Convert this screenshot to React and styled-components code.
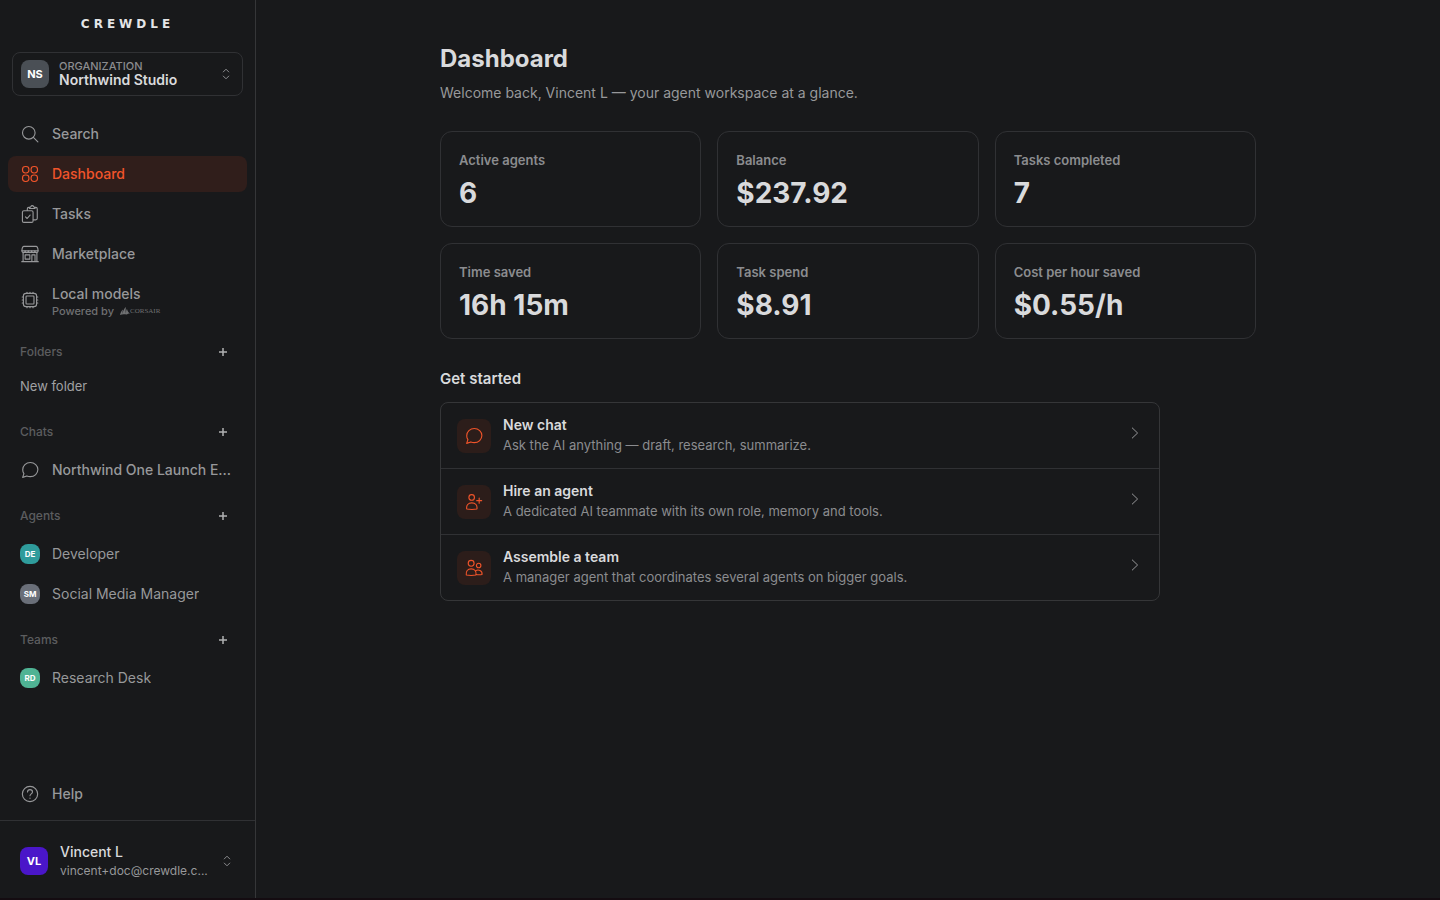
import React from 'react';
import styled, { createGlobalStyle, css } from 'styled-components';

const stats = [
  { label: 'Active agents', value: '6' },
  { label: 'Balance', value: '$237.92' },
  { label: 'Tasks completed', value: '7' },
  { label: 'Time saved', value: '16h 15m' },
  { label: 'Task spend', value: '$8.91' },
  { label: 'Cost per hour saved', value: '$0.55/h' },
];

const App = () => {
  return (
    <Page>
      <GlobalStyle />

      {/* Sidebar */}
      <Sidebar>
        <Brand href="#">CREWDLE</Brand>

        <OrgButton type="button">
          <Avatar $size="large" $color="#4a4f55">NS</Avatar>
          <OrgText>
            <OrgLabel>ORGANIZATION</OrgLabel>
            <OrgName>Northwind Studio</OrgName>
          </OrgText>
          <SortIcon />
        </OrgButton>

        <Nav>
          <NavItem href="#"><SearchIcon /><NavText>Search</NavText></NavItem>
          <NavItem href="#" $active aria-current="page"><DashboardIcon /><NavText>Dashboard</NavText></NavItem>
          <NavItem href="#"><TasksIcon /><NavText>Tasks</NavText></NavItem>
          <NavItem href="#"><StoreIcon /><NavText>Marketplace</NavText></NavItem>
          <NavItem href="#" $tall>
            <ChipIcon />
            <ModelText>
              <NavText>Local models</NavText>
              <PoweredBy>
                Powered by
                <Corsair><ShipIcon />CORSAIR</Corsair>
              </PoweredBy>
            </ModelText>
          </NavItem>
        </Nav>

        <Section title="Folders" tight>
          <FolderItem href="#">New folder</FolderItem>
        </Section>

        <Section title="Chats">
          <NavItem href="#"><ChatIcon /><NavText>Northwind One Launch E...</NavText></NavItem>
        </Section>

        <Section title="Agents">
          <NavItem href="#" $light><Avatar $color="#2f9c9c">DE</Avatar><NavText>Developer</NavText></NavItem>
          <NavItem href="#" $light><Avatar $color="#6a6f79">SM</Avatar><NavText>Social Media Manager</NavText></NavItem>
        </Section>

        <Section title="Teams">
          <NavItem href="#" $light><Avatar $color="#4fb394">RD</Avatar><NavText>Research Desk</NavText></NavItem>
        </Section>

        <Spacer />

        <HelpNav>
          <NavItem href="#"><HelpIcon /><NavText>Help</NavText></NavItem>
        </HelpNav>

        <ProfileButton type="button">
          <Avatar $size="large" $color="#4a16c9">VL</Avatar>
          <ProfileText>
            <ProfileName>Vincent L</ProfileName>
            <ProfileEmail>vincent+doc@crewdle.c...</ProfileEmail>
          </ProfileText>
          <SortIcon />
        </ProfileButton>
      </Sidebar>

      {/* Main content */}
      <Main>
        <Content>
          <Title>Dashboard</Title>
          <Subtitle>Welcome back, Vincent L — your agent workspace at a glance.</Subtitle>

          <StatGrid>
            {stats.map((stat) => (
              <StatCard key={stat.label}>
                <StatLabel>{stat.label}</StatLabel>
                <StatValue>{stat.value}</StatValue>
              </StatCard>
            ))}
          </StatGrid>

          <SubHeading>Get started</SubHeading>
          <ActionList>
            <Action
              icon={<ChatIcon />}
              title="New chat"
              text="Ask the AI anything — draft, research, summarize."
            />
            <Action
              icon={<HireIcon />}
              title="Hire an agent"
              text="A dedicated AI teammate with its own role, memory and tools."
            />
            <Action
              icon={<TeamIcon />}
              title="Assemble a team"
              text="A manager agent that coordinates several agents on bigger goals."
            />
          </ActionList>
        </Content>
      </Main>
    </Page>
  );
};

const Section = ({ title, tight, children }) => (
  <SectionBox>
    <SectionHeader $tight={tight}>
      <SectionTitle>{title}</SectionTitle>
      <AddButton type="button" aria-label={`Add to ${title}`}>
        <svg width="10" height="10" viewBox="0 0 10 10" stroke="currentColor" strokeWidth="1.5">
          <path d="M5 1v8M1 5h8" />
        </svg>
      </AddButton>
    </SectionHeader>
    <SectionItems>{children}</SectionItems>
  </SectionBox>
);

const Action = ({ icon, title, text }) => (
  <ActionRow href="#">
    <ActionIcon>{icon}</ActionIcon>
    <ActionText>
      <ActionTitle>{title}</ActionTitle>
      <ActionDescription>{text}</ActionDescription>
    </ActionText>
    <ActionArrow width="8" height="12" viewBox="0 0 8 12">
      <path d="M1 0.7 6.6 6 1 11.3" />
    </ActionArrow>
  </ActionRow>
);

// Icons, all on a 24 unit grid

const SearchIcon = () => (
  <Icon viewBox="0 0 24 24">
    <circle cx="10.4" cy="10.4" r="8.4" />
    <path d="m16.5 16.5 6 6" />
  </Icon>
);

const DashboardIcon = () => (
  <Icon viewBox="0 0 24 24">
    <rect x="2" y="2" width="8.6" height="8.6" rx="3.9" />
    <rect x="13.4" y="2" width="8.6" height="8.6" rx="3.9" />
    <rect x="2" y="13.4" width="8.6" height="8.6" rx="3.9" />
    <rect x="13.4" y="13.4" width="8.6" height="8.6" rx="3.9" />
  </Icon>
);

const TasksIcon = () => (
  <Icon viewBox="0 0 24 24">
    <rect x="1.9" y="7.6" width="14.2" height="15.6" rx="2" />
    <path d="m6 15.8 2.2 2.2 3.9-4.6" />
    <path d="M8.4 7.4V5.2c0-1.2.8-2 2-2h1.2M18.2 3.2h1.5c1.2 0 2 .8 2 2v12.6c0 1.2-.8 2-2 2h-3.4" />
    <path d="M11.2 4.6c0-1.6 1-2.1 2-2.3.5-1.9 3-1.9 3.6 0 1 .2 1.9.7 1.9 2.3z" />
  </Icon>
);

const StoreIcon = () => (
  <Icon viewBox="0 0 24 24">
    <path d="M4 1.9h16c1.6 0 2.6 1.8 2.8 5.9H1.2C1.4 3.7 2.4 1.9 4 1.9z" />
    <path d="M1.2 7.8c0 3.2 4.3 3.2 4.3 0 0 3.2 4.3 3.2 4.3 0 0 3.2 4.4 3.2 4.4 0 0 3.2 4.3 3.2 4.3 0 0 3.2 4.3 3.2 4.3 0" />
    <path d="M2.8 10.5v11.7M21.2 10.5v11.7M1 22.2h22" />
    <path d="M5.5 13.2h6.3v5.6H5.5zM14.5 22v-8.8h4.2V22" />
  </Icon>
);

const ChipIcon = () => (
  <Icon viewBox="0 0 24 24">
    <rect x="3.2" y="3.2" width="17.6" height="17.6" rx="3.5" />
    <rect x="6.7" y="6.7" width="10.6" height="10.6" rx="1" />
    <path d="M8 3V1.6M12 3V1.6M16 3V1.6M8 22.4V21M12 22.4V21M16 22.4V21M3 8H1.6M3 12H1.6M3 16H1.6M22.4 8H21M22.4 12H21M22.4 16H21" />
  </Icon>
);

const ChatIcon = () => (
  <Icon viewBox="0 0 24 24">
    <path d="M12.4 2c5.7 0 10.1 4.2 10.1 9.4s-4.4 9.5-10.1 9.5c-1.7 0-3.2-.4-4.6-1L2.2 21.8l1.7-4.9c-1-1.5-1.6-3.4-1.6-5.4C2.3 6.2 6.7 2 12.4 2z" />
  </Icon>
);

const HelpIcon = () => (
  <Icon viewBox="0 0 24 24">
    <circle cx="12" cy="12" r="10.2" />
    <path d="M8.7 9.4c0-1.9 1.5-3.2 3.3-3.2s3.3 1.3 3.3 3.1c0 2.5-3.3 2.5-3.3 5" />
    <path d="M12 17.3v.5" />
  </Icon>
);

const HireIcon = () => (
  <Icon viewBox="0 0 24 24">
    <circle cx="8.9" cy="5.9" r="3.7" />
    <path d="M2.3 21.3c-.8-5 2-8.2 6.8-8.2s7.6 3.2 6.8 8.2c-4.3.8-9.300.8-13.600 0z" />
    <path d="M18.9 6.9v6.6M15.6 10.2h6.6" />
  </Icon>
);

const TeamIcon = () => (
  <Icon viewBox="0 0 24 24">
    <circle cx="8.2" cy="5.7" r="3.9" />
    <circle cx="18.2" cy="8.6" r="3" />
    <path d="M1.700 21.300c-.8-5 1.900-8.200 6.500-8.200s7.300 3.200 6.500 8.200c-4.100.8-8.900.8-13 0z" />
    <path d="M14 15.900c3.600-2.500 9.400-.6 8.700 4.700-2.500.5-5.300.5-7.800 0" />
  </Icon>
);

const SortIcon = () => (
  <SortSvg width="8" height="12" viewBox="0 0 8 12">
    <path d="M1 4.2l3-3 3 3M1 7.8l3 3 3-3" />
  </SortSvg>
);

const ShipIcon = () => (
  <svg width="10" height="8" viewBox="0 0 20 16" fill="currentColor">
    <path d="M0 16c1-5 3-9 6-11-1 3-1 6-1 9 1-6 3-11 7-14-1 5-1 9 0 13 0-4 0-7 2-9 1 4 3 7 6 9-3 0-5 1-7 2-4-1-9-1-13 1z" />
  </svg>
);

// Styled Components

const GlobalStyle = createGlobalStyle`
  *, *::before, *::after {
    box-sizing: border-box;
  }

  body {
    margin: 0;
    background-color: #18191b;
    color: #d9dadc;
    font-family: Inter, "Liberation Sans", sans-serif;
    font-size: 14px;
    line-height: 20px;
    -webkit-font-smoothing: antialiased;
  }

  a {
    color: inherit;
    text-decoration: none;
  }

  button {
    font: inherit;
    color: inherit;
    background: none;
    border: none;
    padding: 0;
    text-align: left;
    cursor: pointer;
  }
`;

const ellipsis = css`
  overflow: hidden;
  text-overflow: ellipsis;
  white-space: nowrap;
`;

const Page = styled.div`
  display: flex;
  min-height: 100vh;
  border-bottom: 2px solid #140c11;
`;

const Sidebar = styled.aside`
  display: flex;
  flex-direction: column;
  flex: none;
  width: 256px;
  border-right: 1px solid #353638;
`;

const Brand = styled.a`
  padding: 14px 0 18px;
  text-align: center;
  color: #e4e5e7;
  font-family: "DejaVu Sans", sans-serif;
  font-size: 12px;
  font-weight: 700;
  letter-spacing: 4px;
`;

const OrgButton = styled.button`
  display: flex;
  align-items: center;
  gap: 10px;
  height: 44px;
  margin: 0 12px;
  padding: 0 12px 0 8px;
  border: 1px solid #303134;
  border-radius: 8px;
`;

const Avatar = styled.span`
  display: flex;
  align-items: center;
  justify-content: center;
  flex: none;
  width: ${(props) => (props.$size === 'large' ? 28 : 20)}px;
  height: ${(props) => (props.$size === 'large' ? 28 : 20)}px;
  border-radius: 8px;
  background-color: ${(props) => props.$color};
  color: #ffffff;
  font-size: ${(props) => (props.$size === 'large' ? 11 : 8)}px;
  font-weight: 700;
`;

const OrgText = styled.span`
  display: flex;
  flex-direction: column;
  flex: 1;
  min-width: 0;
`;

const OrgLabel = styled.span`
  color: #8b8c8f;
  font-size: 11px;
  font-weight: 500;
  line-height: 12px;
`;

const OrgName = styled.span`
  ${ellipsis}
  font-weight: 600;
  line-height: 16px;
`;

const SortSvg = styled.svg`
  flex: none;
  fill: none;
  stroke: #8b8c8f;
  stroke-width: 1;
`;

const Nav = styled.nav`
  display: flex;
  flex-direction: column;
  gap: 4px;
  margin-top: 20px;
  padding: 0 8px;
`;

const HelpNav = styled(Nav)`
  margin: 0 0 8px;
`;

const NavItem = styled.a`
  display: flex;
  align-items: center;
  gap: 12px;
  height: ${(props) => (props.$tall ? 48 : 36)}px;
  padding: 0 12px;
  border-radius: 8px;
  color: ${(props) => (props.$active ? '#f0542a' : '#97989a')};
  background-color: ${(props) => (props.$active ? '#301e1b' : 'transparent')};
  font-weight: ${(props) => (props.$light ? 400 : 500)};
`;

const NavText = styled.span`
  ${ellipsis}
`;

const Icon = styled.svg`
  flex: none;
  width: 20px;
  height: 18px;
  fill: none;
  stroke: currentColor;
  stroke-width: 1.5;
  stroke-linecap: round;
  stroke-linejoin: round;
`;

const ModelText = styled.span`
  display: flex;
  flex-direction: column;
  padding-top: 2px;
`;

const PoweredBy = styled.span`
  display: flex;
  align-items: center;
  gap: 6px;
  color: #6f7072;
  font-size: 11px;
  line-height: 14px;
`;

const Corsair = styled.span`
  display: flex;
  align-items: center;
  font-family: "Liberation Serif", serif;
  font-size: 7px;
`;

const Spacer = styled.div`
  flex: 1;
`;

const SectionBox = styled.section`
  margin-top: 16px;
`;

const SectionHeader = styled.div`
  display: flex;
  align-items: center;
  justify-content: space-between;
  height: 24px;
  margin-bottom: ${(props) => (props.$tight ? 4 : 8)}px;
  padding: 0 24px 0 20px;
`;

const SectionTitle = styled.h2`
  margin: 0;
  color: #5c5d5f;
  font-size: 12px;
  font-weight: 500;
`;

const AddButton = styled.button`
  display: flex;
  align-items: center;
  justify-content: center;
  width: 16px;
  height: 16px;
  color: #b0b1b3;
`;

const SectionItems = styled.div`
  display: flex;
  flex-direction: column;
  gap: 4px;
  padding: 0 8px;
`;

const FolderItem = styled.a`
  display: flex;
  align-items: center;
  height: 36px;
  padding: 0 12px;
  color: #a0a1a3;
  font-size: 13px;
`;

const ProfileButton = styled.button`
  display: flex;
  align-items: center;
  gap: 12px;
  padding: 21px 24px 18px 20px;
  border-top: 1px solid #303134;
`;

const ProfileText = styled.span`
  display: flex;
  flex-direction: column;
  flex: 1;
  min-width: 0;
`;

const ProfileName = styled.span`
  font-weight: 500;
`;

const ProfileEmail = styled.span`
  ${ellipsis}
  color: #97989a;
  font-size: 12px;
  line-height: 18px;
`;

const Main = styled.main`
  flex: 1;
  min-width: 0;
  padding: 43px 32px;
`;

const Content = styled.div`
  max-width: 816px;
  margin: 0 auto;
`;

const Title = styled.h1`
  margin: 0 0 8px;
  font-size: 24px;
  font-weight: 700;
  line-height: 32px;
`;

const Subtitle = styled.p`
  margin: 0 0 28px;
  color: #97989a;
`;

const StatGrid = styled.div`
  display: grid;
  grid-template-columns: repeat(3, 1fr);
  gap: 16px;
`;

const StatCard = styled.div`
  padding: 18px;
  border: 1px solid #303134;
  border-radius: 12px;
`;

const StatLabel = styled.div`
  margin-bottom: 8px;
  color: #8b8c8f;
  font-size: 13px;
  font-weight: 600;
`;

const StatValue = styled.div`
  font-size: 28px;
  font-weight: 700;
  line-height: 30px;
`;

const SubHeading = styled.h2`
  margin: 30px 0 13px;
  font-size: 15px;
  font-weight: 600;
  line-height: 20px;
`;

const ActionList = styled.div`
  max-width: 720px;
  border: 1px solid #353638;
  border-radius: 8px;
`;

const ActionRow = styled.a`
  display: flex;
  align-items: center;
  gap: 12px;
  padding: 12px 20px 12px 16px;

  & + & {
    border-top: 1px solid #303134;
  }
`;

const ActionIcon = styled.span`
  display: flex;
  align-items: center;
  justify-content: center;
  flex: none;
  width: 34px;
  height: 34px;
  border-radius: 8px;
  background-color: #2c1d1a;
  color: #f0542a;
`;

const ActionText = styled.span`
  display: flex;
  flex-direction: column;
  flex: 1;
`;

const ActionTitle = styled.span`
  font-weight: 600;
  line-height: 20px;
`;

const ActionDescription = styled.span`
  color: #8b8c8f;
  font-size: 13px;
  line-height: 21px;
`;

const ActionArrow = styled.svg`
  align-self: flex-start;
  flex: none;
  margin-top: 12px;
  fill: none;
  stroke: #97989a;
  stroke-width: 1;
`;

export default App;
